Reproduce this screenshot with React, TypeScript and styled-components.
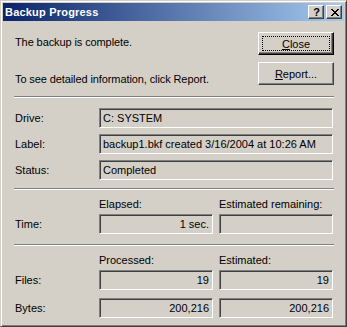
import React from 'react';
import styled, {createGlobalStyle, css} from 'styled-components';

const GlobalStyle = createGlobalStyle`
    html, body {
        margin: 0;
        padding: 0;
        background: #d4d0c8;
    }
    body {
        font-family: "Liberation Sans", Arial, sans-serif;
        font-size: 11px;
        color: #000;
    }
`;

const raised = css`
    border: 1px solid;
    border-color: #ffffff #404040 #404040 #ffffff;
    box-shadow: inset -1px -1px #808080, inset 1px 1px #d4d0c8;
`;

const CloseGlyph = () => (
    <svg width="8" height="7" viewBox="0 0 8 7" shapeRendering="crispEdges">
        <path
            fill="#000"
            d="M0 0h2v1H0zM6 0h2v1H6zM1 1h2v1H1zM5 1h2v1H5zM2 2h4v1H2zM3 3h2v1H3zM2 4h4v1H2zM1 5h2v1H1zM5 5h2v1H5zM0 6h2v1H0zM6 6h2v1H6z"
        />
    </svg>
);

const App = () => {
    return (
        <>
            <GlobalStyle />
            <Window>
                <TitleBar>
                    <Title>Backup Progress</Title>
                    <Caps>
                        <CapButton>?</CapButton>
                        <CapButton><CloseGlyph /></CapButton>
                    </Caps>
                </TitleBar>

                <Body>
                    <TopSection>
                        <Messages>
                            <Message>The backup is complete.</Message>
                            <Message $gap={24}>To see detailed information, click Report.</Message>
                        </Messages>
                        <Buttons>
                            <PushButton $isDefault>
                                <FocusRect><u>C</u>lose</FocusRect>
                            </PushButton>
                            <PushButton>
                                <span><u>R</u>eport...</span>
                            </PushButton>
                        </Buttons>
                    </TopSection>

                    <Separator $top={10} />

                    <InfoGrid $top={10}>
                        <RowLabel>Drive:</RowLabel>
                        <Field $wide>C: SYSTEM</Field>
                        <RowLabel>Label:</RowLabel>
                        <Field $wide>backup1.bkf created 3/16/2004 at 10:26 AM</Field>
                        <RowLabel>Status:</RowLabel>
                        <Field $wide>Completed</Field>
                    </InfoGrid>

                    <Separator $top={8} />

                    <InfoGrid $top={8}>
                        <span />
                        <ColHeader>Elapsed:</ColHeader>
                        <ColHeader>Estimated remaining:</ColHeader>
                        <RowLabel>Time:</RowLabel>
                        <Field $right>1 sec.</Field>
                        <Field $right></Field>
                    </InfoGrid>

                    <Separator $top={10} />

                    <InfoGrid $top={8} $rowGap={8}>
                        <span />
                        <ColHeader $pull={5}>Processed:</ColHeader>
                        <ColHeader $pull={5}>Estimated:</ColHeader>
                        <RowLabel>Files:</RowLabel>
                        <Field $right>19</Field>
                        <Field $right>19</Field>
                        <RowLabel>Bytes:</RowLabel>
                        <Field $right>200,216</Field>
                        <Field $right>200,216</Field>
                    </InfoGrid>
                </Body>
            </Window>
        </>
    );
};

export default App;

const Window = styled.div`
    box-sizing: border-box;
    width: 347px;
    height: 327px;
    padding: 2px;
    border: 1px solid;
    border-color: #d4d0c8 #404040 #404040 #d4d0c8;
    box-shadow: inset 1px 1px #ffffff, inset -1px -1px #808080;
    background: #d4d0c8;
    display: flex;
    flex-direction: column;
`;

const TitleBar = styled.div`
    height: 18px;
    display: flex;
    align-items: center;
    justify-content: space-between;
    padding: 0 2px 0 2px;
    background: linear-gradient(to right, #0a246a, #a6caf0);
`;

const Title = styled.span`
    color: #ffffff;
    font-weight: bold;
    font-size: 11px;
    line-height: 13px;
    letter-spacing: 0.2px;
`;

const Caps = styled.div`
    display: flex;
    gap: 2px;
`;

const CapButton = styled.div`
    box-sizing: border-box;
    width: 16px;
    height: 14px;
    ${raised};
    background: #d4d0c8;
    display: flex;
    align-items: center;
    justify-content: center;
    font-weight: bold;
    font-size: 11px;
    line-height: 12px;
    padding-left: 1px;
`;

const Body = styled.div`
    flex: 1;
    display: flex;
    flex-direction: column;
    padding: 0 10px 0 11px;
`;

const TopSection = styled.div`
    display: flex;
    justify-content: space-between;
    padding-top: 11px;
`;

const Messages = styled.div`
    display: flex;
    flex-direction: column;
    padding: 4px 0 0 1px;
    letter-spacing: -0.1px;
`;

const Message = styled.div<{$gap?: number}>`
    line-height: 13px;
    margin-top: ${p => p.$gap || 0}px;
`;

const Buttons = styled.div`
    display: flex;
    flex-direction: column;
    gap: 7px;
`;

const PushButton = styled.div<{$isDefault?: boolean}>`
    box-sizing: border-box;
    width: 76px;
    height: 23px;
    ${raised};
    ${p => p.$isDefault && css`
        border-color: #ffffff #000000 #000000 #ffffff;
        box-shadow: inset -1px -1px #404040, inset -2px -2px #808080;
    `}
    background: #d4d0c8;
    display: flex;
    align-items: center;
    justify-content: center;
    padding: 3px;
    font-size: 11px;
`;

const FocusRect = styled.span`
    box-sizing: border-box;
    width: 100%;
    height: 100%;
    border: 1px dotted #000;
    display: flex;
    align-items: center;
    justify-content: center;
`;

const Separator = styled.div<{$top: number}>`
    margin-top: ${p => p.$top}px;
    border-top: 1px solid #808080;
    border-bottom: 1px solid #ffffff;
    height: 0;
`;

const InfoGrid = styled.div<{$top: number, $rowGap?: number}>`
    display: grid;
    grid-template-columns: 79px 114px 114px;
    column-gap: 6px;
    row-gap: ${p => p.$rowGap || 6}px;
    margin-top: ${p => p.$top}px;
    align-items: center;
`;

const RowLabel = styled.div`
    padding-left: 1px;
    line-height: 13px;
`;

const ColHeader = styled.div<{$pull?: number}>`
    line-height: 13px;
    margin-bottom: -${p => p.$pull || 3}px;
`;

const Field = styled.div<{$wide?: boolean, $right?: boolean}>`
    box-sizing: border-box;
    height: 20px;
    grid-column: ${p => p.$wide ? 'span 2' : 'auto'};
    border: 1px solid;
    border-color: #808080 #ffffff #ffffff #808080;
    box-shadow: inset 1px 1px #404040, inset -1px -1px #d4d0c8;
    display: flex;
    align-items: center;
    justify-content: ${p => p.$right ? 'flex-end' : 'flex-start'};
    padding: 0 3px 0 3px;
    line-height: 16px;
    white-space: nowrap;
`;
